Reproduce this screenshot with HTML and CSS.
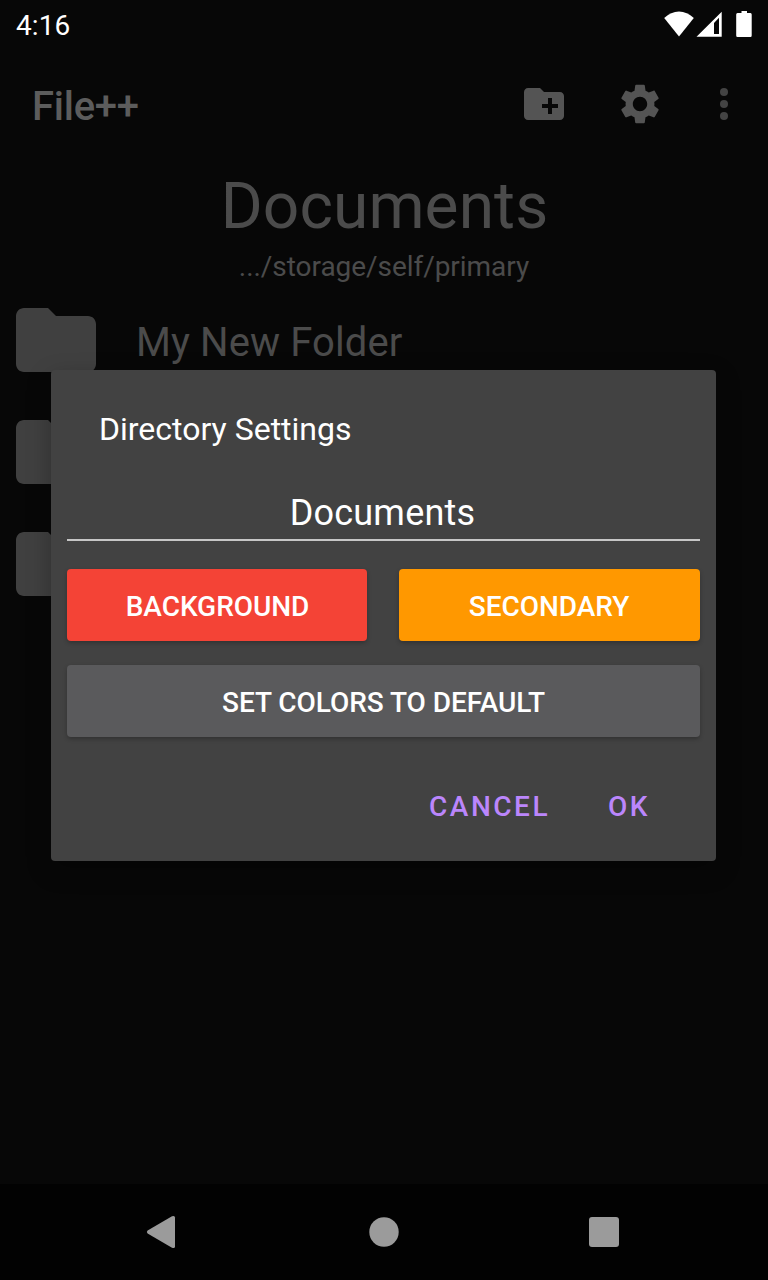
FILE: index.html
```html
<!DOCTYPE html>
<html lang="en">
<head>
<meta charset="utf-8">
<title>File++</title>
<link rel="stylesheet" href="styles.css">
</head>
<body>
<div class="screen">
  <header class="status">
    <span class="clock">4:16</span>
    <svg class="status-icons" width="88" height="26" viewBox="0 0 88 26">
      <path d="M15 25.500 L.2 7 Q7 .5 15 .5 T29.800 7 Z"/>
      <path fill-rule="evenodd" d="M32.500 25.700 L57.700 .8 V25.700 Z M50 12 V23 H55 V6.700 Z"/>
      <path d="M77.500 0 H83 V2 H86.500 Q87.700 2 87.700 3.500 V24.500 Q87.700 26 86.500 26 H73.500 Q72.200 26 72.200 24.500 V3.500 Q72.200 2 73.500 2 H77.500 Z"/>
    </svg>
  </header>
  <nav class="toolbar">
    <h1 class="app-name">File++</h1>
    <div class="actions">
      <svg class="action" viewBox="0 0 24 24"><path d="M20 6h-8l-2-2H4c-1.110 0-1.990.89-1.990 2L2 18c0 1.110.89 2 2 2h16c1.110 0 2-.89 2-2V8c0-1.110-.89-2-2-2zm-1 8h-3v3h-2v-3h-3v-2h3V9h2v3h3v2z"/></svg>
      <svg class="action" viewBox="0 0 24 24"><path d="M19.140 12.940c.04-.3.06-.61.06-.94 0-.32-.02-.64-.07-.94l2.030-1.580c.18-.14.23-.41.12-.61l-1.920-3.320c-.12-.22-.37-.29-.59-.22l-2.390.96c-.5-.38-1.030-.7-1.620-.94l-.36-2.540c-.04-.24-.24-.41-.48-.41h-3.840c-.24 0-.43.17-.47.41l-.36 2.540c-.59.24-1.130.57-1.620.94l-2.390-.96c-.22-.08-.47 0-.59.22L2.740 8.870c-.12.21-.08.47.12.61l2.030 1.580c-.05.3-.09.63-.09.94s.02.64.07.94l-2.030 1.580c-.18.14-.23.41-.12.61l1.920 3.320c.12.22.37.29.59.22l2.390-.96c.5.38 1.030.7 1.620.94l.36 2.540c.05.24.24.41.48.41h3.840c.24 0 .44-.17.47-.41l.36-2.540c.59-.24 1.130-.56 1.620-.94l2.390.96c.22.08.47 0 .59-.22l1.920-3.320c.12-.22.07-.47-.12-.61l-2.010-1.580zM12 15.600c-1.980 0-3.600-1.620-3.600-3.600s1.620-3.600 3.600-3.600 3.600 1.620 3.600 3.600-1.620 3.600-3.600 3.600z"/></svg>
      <svg class="action more" viewBox="0 0 24 24"><circle cx="12" cy="6" r="2"/><circle cx="12" cy="12" r="2"/><circle cx="12" cy="18" r="2"/></svg>
    </div>
  </nav>
  <main class="content">
    <h2 class="dir-name">Documents</h2>
    <p class="dir-path">.../storage/self/primary</p>
    <ul class="files">
      <li class="file">
        <svg class="folder" viewBox="0 0 24 24"><path d="M10 4H4c-1.100 0-2 .9-2 2v12c0 1.100.9 2 2 2h16c1.100 0 2-.9 2-2V8c0-1.100-.9-2-2-2h-8l-2-2z"/></svg>
        <span>My New Folder</span>
      </li>
      <li class="file">
        <svg class="folder" viewBox="0 0 24 24"><path d="M10 4H4c-1.100 0-2 .9-2 2v12c0 1.100.9 2 2 2h16c1.100 0 2-.9 2-2V8c0-1.100-.9-2-2-2h-8l-2-2z"/></svg>
      </li>
      <li class="file">
        <svg class="folder" viewBox="0 0 24 24"><path d="M10 4H4c-1.100 0-2 .9-2 2v12c0 1.100.9 2 2 2h16c1.100 0 2-.9 2-2V8c0-1.100-.9-2-2-2h-8l-2-2z"/></svg>
      </li>
    </ul>
  </main>
  <footer class="navbar">
    <svg viewBox="3 0 32 34"><path d="M2.600 15.600 L27 1.200 Q30 .2 30 2.500 V31.500 Q30 33.800 27 32.800 L2.600 18.400 Q1 17 2.600 15.600 Z"/></svg>
    <svg viewBox="0 0 32 34"><circle cx="16" cy="17" r="14.700"/></svg>
    <svg viewBox="0 0 32 34"><rect x="1" y="2" width="30" height="30" rx="3"/></svg>
  </footer>
  <section class="dialog">
    <h3 class="dialog-title">Directory Settings</h3>
    <div class="field">Documents</div>
    <div class="colors">
      <button class="btn red">BACKGROUND</button>
      <button class="btn orange">SECONDARY</button>
    </div>
    <button class="btn grey">SET COLORS TO DEFAULT</button>
    <div class="dialog-actions">
      <span>CANCEL</span>
      <span>OK</span>
    </div>
  </section>
</div>
</body>
</html>
```
FILE: styles.css
```css
* { box-sizing: border-box; margin: 0; padding: 0; }
body { background: #070707; font-family: Roboto, "Liberation Sans", sans-serif; }
.screen {
  position: relative;
  display: flex;
  flex-direction: column;
  width: 768px;
  height: 1280px;
  overflow: hidden;
  background: #070707;
}
.status {
  display: flex;
  justify-content: space-between;
  height: 48px;
  padding: 0 16px;
}
.clock { font-size: 28px; line-height: 51px; letter-spacing: .1px; color: #fff; }
.status-icons { margin-top: 11px; fill: #fff; }
.toolbar {
  display: flex;
  justify-content: space-between;
  align-items: center;
  height: 112px;
  padding: 0 20px 0 32px;
}
.app-name { padding-top: 6px; font-size: 40px; font-weight: 500; line-height: 48px; letter-spacing: -.25px; color: #5c5c5c; }
.actions { display: flex; gap: 48px; }
.action { width: 48px; height: 48px; fill: #545454; }
.action.more { margin-left: -12px; fill: #434343; }
.content { flex: 1; padding-top: 9px; text-align: center; color: #4b4b4b; }
.dir-name { padding-left: 1px; font-size: 64px; font-weight: 400; line-height: 76px; letter-spacing: .1px; }
.dir-path { padding-top: 5px; font-size: 28px; line-height: 34px; letter-spacing: -.05px; }
.files { list-style: none; }
.file {
  display: flex;
  align-items: center;
  gap: 32px;
  height: 112px;
  padding-left: 8px;
  font-size: 40px;
  letter-spacing: .1px;
}
.file span { padding-top: 6px; line-height: 48px; }
.folder { width: 96px; height: 96px; fill: #404040; }
.navbar {
  display: flex;
  justify-content: center;
  align-items: center;
  gap: 188px;
  height: 96px;
  background: #020202;
}
.navbar svg { width: 32px; height: 34px; overflow: visible; fill: #9b9b9b; }
.dialog {
  position: absolute;
  left: 51px;
  top: 370px;
  width: 665px;
  height: 491px;
  padding: 34px 16px 0;
  border-radius: 4px;
  background: #424242;
  color: #fff;
  box-shadow: 0 8px 24px rgba(0, 0, 0, .28);
}
.dialog-title { padding-left: 32px; font-size: 32px; font-weight: 400; line-height: 50px; }
.field {
  height: 53px;
  margin-top: 34px;
  padding-right: 2px;
  border-bottom: 2px solid #c6c6c6;
  font-size: 36px;
  line-height: 51px;
  letter-spacing: .2px;
  text-align: center;
}
.colors { display: grid; grid-template-columns: 300px 301px; gap: 32px; margin: 28px 0 24px; }
.btn {
  display: block;
  width: 100%;
  height: 72px;
  padding-top: 3px;
  border: 0;
  border-radius: 4px;
  color: #fff;
  font: 500 28px/34px Roboto, "Liberation Sans", sans-serif;
  letter-spacing: -.05px;
  box-shadow: 0 2px 4px rgba(0, 0, 0, .25);
}
.red { padding-left: 1px; background: #f44336; }
.orange { padding-right: 1px; background: #ff9800; }
.grey { background: #5a5a5c; }
.dialog-actions {
  display: flex;
  justify-content: flex-end;
  gap: 58px;
  padding: 53px 50px 0 0;
  font-size: 28px;
  font-weight: 500;
  line-height: 34px;
  letter-spacing: 2.5px;
  color: #bb86fc;
}
```
